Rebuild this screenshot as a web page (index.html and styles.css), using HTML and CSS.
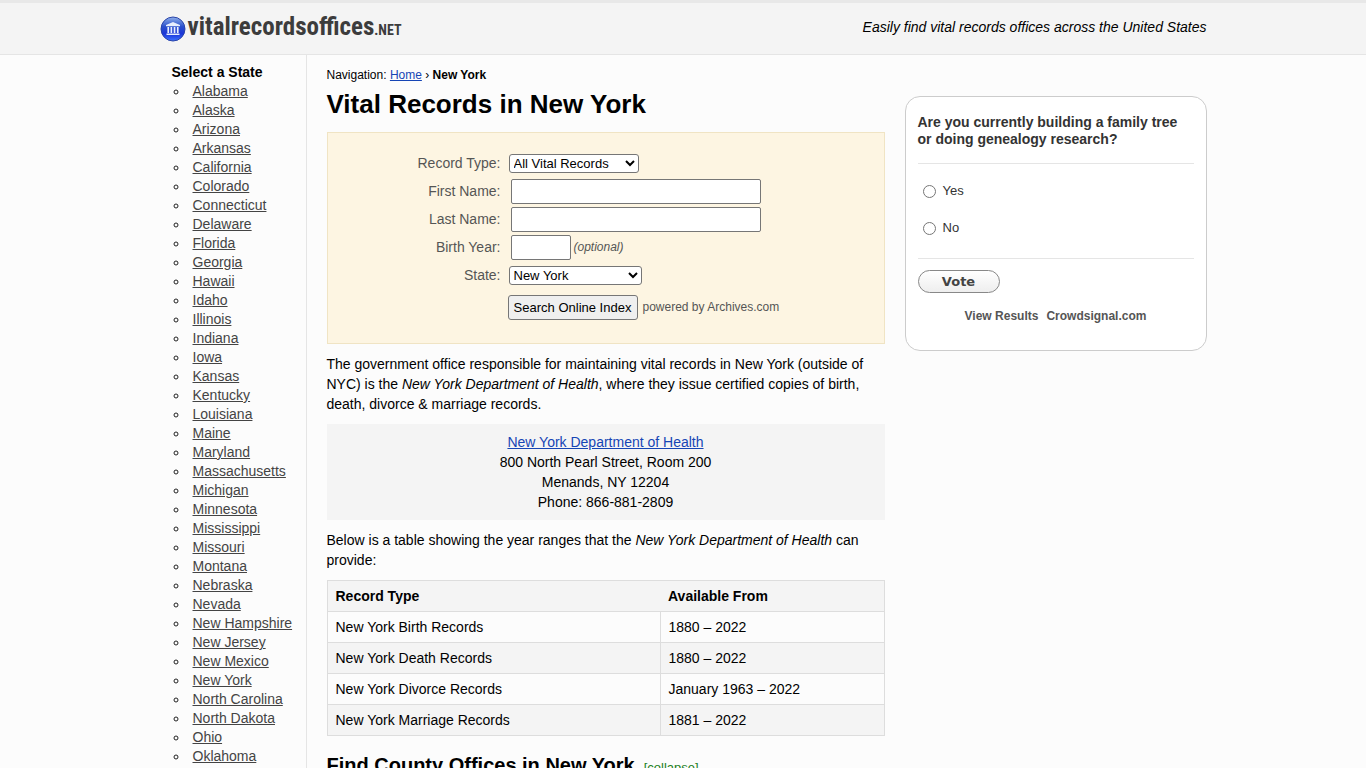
FILE: index.html
```html
<!DOCTYPE html>
<html lang="en">
<head>
<meta charset="utf-8">
<title>Vital Records in New York</title>
<link rel="stylesheet" href="styles.css">
</head>
<body>
<header class="site-header">
  <div class="container header-row">
    <a class="logo" href="#">
      <svg class="logo-icon" viewBox="0 0 26 26" aria-hidden="true">
        <defs>
          <linearGradient id="ball" x1="0" y1="0" x2="0" y2="1">
            <stop offset="0" stop-color="#8fb0ea"/>
            <stop offset=".4" stop-color="#2b50cc"/>
            <stop offset=".7" stop-color="#1a35d8"/>
            <stop offset="1" stop-color="#3f74ff"/>
          </linearGradient>
        </defs>
        <circle cx="13" cy="13" r="12" fill="url(#ball)" stroke="#2a44a8"/>
        <path fill="#e8effd" d="M13 6l7 3v1.300H6V9zM7.400 11h1.700v6H7.400zM10.500 11h1.700v6h-1.700zM13.700 11h1.700v6h-1.700zM16.900 11h1.700v6h-1.700zM6.500 17.400h13v1.600h-13z"/>
      </svg>
      <span class="logo-text">vitalrecordsoffices<span class="logo-tld">.NET</span></span>
    </a>
    <p class="tagline">Easily find vital records offices across the United States</p>
  </div>
</header>
<div class="container columns">
  <nav class="sidebar" aria-label="States">
    <strong>Select a State</strong>
    <ul class="states">
      <li><a href="#">Alabama</a></li>
      <li><a href="#">Alaska</a></li>
      <li><a href="#">Arizona</a></li>
      <li><a href="#">Arkansas</a></li>
      <li><a href="#">California</a></li>
      <li><a href="#">Colorado</a></li>
      <li><a href="#">Connecticut</a></li>
      <li><a href="#">Delaware</a></li>
      <li><a href="#">Florida</a></li>
      <li><a href="#">Georgia</a></li>
      <li><a href="#">Hawaii</a></li>
      <li><a href="#">Idaho</a></li>
      <li><a href="#">Illinois</a></li>
      <li><a href="#">Indiana</a></li>
      <li><a href="#">Iowa</a></li>
      <li><a href="#">Kansas</a></li>
      <li><a href="#">Kentucky</a></li>
      <li><a href="#">Louisiana</a></li>
      <li><a href="#">Maine</a></li>
      <li><a href="#">Maryland</a></li>
      <li><a href="#">Massachusetts</a></li>
      <li><a href="#">Michigan</a></li>
      <li><a href="#">Minnesota</a></li>
      <li><a href="#">Mississippi</a></li>
      <li><a href="#">Missouri</a></li>
      <li><a href="#">Montana</a></li>
      <li><a href="#">Nebraska</a></li>
      <li><a href="#">Nevada</a></li>
      <li><a href="#">New Hampshire</a></li>
      <li><a href="#">New Jersey</a></li>
      <li><a href="#">New Mexico</a></li>
      <li><a href="#">New York</a></li>
      <li><a href="#">North Carolina</a></li>
      <li><a href="#">North Dakota</a></li>
      <li><a href="#">Ohio</a></li>
      <li><a href="#">Oklahoma</a></li>
    </ul>
  </nav>
  <main class="main">
    <div class="breadcrumb">Navigation: <a href="#">Home</a> › <strong>New York</strong></div>
    <h1>Vital Records in New York</h1>
    <form class="search">
      <label for="type">Record Type:</label>
      <div class="field"><select id="type" class="select-type"><option>All Vital Records</option></select></div>
      <label for="first">First Name:</label>
      <div class="field"><input class="text" id="first" type="text"></div>
      <label for="last">Last Name:</label>
      <div class="field"><input class="text" id="last" type="text"></div>
      <label for="year">Birth Year:</label>
      <div class="field"><input class="text year" id="year" type="text"><small><em>(optional)</em></small></div>
      <label for="state">State:</label>
      <div class="field"><select id="state" class="select-state"><option>New York</option></select></div>
      <div class="field actions"><button class="submit" type="button">Search Online Index</button><small>powered by Archives.com</small></div>
    </form>
    <p>The government office responsible for maintaining vital records in New York (outside of NYC) is the <em>New York Department of Health</em>, where they issue certified copies of birth, death, divorce &amp; marriage records.</p>
    <address class="office">
      <a href="#">New York Department of Health</a><br>
      800 North Pearl Street, Room 200<br>
      Menands, NY 12204<br>
      Phone: 866-881-2809
    </address>
    <p>Below is a table showing the year ranges that the <em>New York Department of Health</em> can provide:</p>
    <table class="records">
      <thead><tr><th class="type-col">Record Type</th><th>Available From</th></tr></thead>
      <tbody>
        <tr><td>New York Birth Records</td><td>1880 – 2022</td></tr>
        <tr><td>New York Death Records</td><td>1880 – 2022</td></tr>
        <tr><td>New York Divorce Records</td><td>January 1963 – 2022</td></tr>
        <tr><td>New York Marriage Records</td><td>1881 – 2022</td></tr>
      </tbody>
    </table>
    <div class="section-head">
      <h2>Find County Offices in New York</h2>
      <a class="collapse" href="#">[collapse]</a>
    </div>
  </main>
  <aside class="aside">
    <form class="poll">
      <fieldset>
        <legend>Are you currently building a family tree or doing genealogy research?</legend>
        <div class="answers">
          <label><input type="radio" name="tree">Yes</label>
          <label><input type="radio" name="tree">No</label>
        </div>
      </fieldset>
      <button class="vote" type="button">Vote</button>
      <div class="poll-links"><a href="#">View Results</a><a href="#">Crowdsignal.com</a></div>
    </form>
  </aside>
</div>
</body>
</html>
```
FILE: styles.css
```css
* { box-sizing: border-box; }
body {
  margin: 0;
  background: #fcfcfc;
  color: #000;
  font: 14px/20px "Liberation Sans", Arial, sans-serif;
}
.container { max-width: 1047px; margin: 0 auto; }
.site-header {
  background: #f4f4f4;
  border-top: 3px solid #e8e8e8;
  border-bottom: 1px solid #e5e5e5;
}
.header-row {
  display: flex;
  align-items: center;
  justify-content: space-between;
  min-height: 51px;
}
.logo { display: flex; align-items: center; gap: 2px; color: #3c3c3c; text-decoration: none; }
.logo-icon { width: 26px; height: 26px; }
.logo-text { font: bold 25px/30px "Liberation Sans Narrow", "Roboto Condensed", "Open Sans Condensed", "DejaVu Sans Condensed", sans-serif; }
.logo-tld { font-size: 14px; }
.tagline { margin: 0; padding-bottom: 4px; font-style: italic; }

.columns { display: flex; }
.sidebar {
  flex: 0 0 147px;
  padding: 8px 0 8px 12px;
  border-right: 1px solid #e5e5e5;
  line-height: 19px;
}
.states { margin: 0; padding-left: 17px; list-style: circle; color: #222; }
.states li { padding-left: 4px; }
.states a { color: #444; }

.main { flex: 1; min-width: 0; padding: 10px 0 0 20px; }
.main a { color: #1645b5; }
.breadcrumb { font-size: 12px; }
h1 { margin: 0 0 8px; font-size: 26px; line-height: 39px; }
.search {
  display: grid;
  grid-template-columns: 173px 1fr;
  column-gap: 7px;
  padding: 16px 0 18px;
  margin-bottom: 10px;
  border: 1px solid #f0e4c4;
  background: #fdf5e2;
  color: #555;
}
.search label { text-align: right; line-height: 28px; }
.field { display: flex; align-items: center; min-height: 28px; }
.field small { font-size: 12px; }
.search select {
  height: 19px;
  margin-left: 1px;
  padding: 0;
  border: 1px solid #767676;
  border-radius: 3px;
  background-color: #fff;
  color: #000;
  font: 13px "Liberation Sans", Arial, sans-serif;
}
.search .select-type { width: 130px; }
.search .select-state { width: 133px; }
.text {
  width: 250px;
  height: 25px;
  margin: 0 3px;
  border: 1px solid #767676;
  border-radius: 2px;
  background: #fff;
  font: 13px "Liberation Sans", Arial, sans-serif;
}
.year { width: 60px; }
.actions { grid-column: 2; gap: 5px; min-height: 36px; }
.submit {
  height: 25px;
  width: 130px;
  padding: 0;
  border: 1px solid #767676;
  border-radius: 3px;
  background: #efefef;
  color: #000;
  white-space: nowrap;
  font: 13px "Liberation Sans", Arial, sans-serif;
}
p { margin: 0 0 10px; }
.office {
  margin-bottom: 10px;
  padding: 8px;
  background: #f4f4f4;
  font-style: normal;
  text-align: center;
}
.records { width: 100%; border: 1px solid #ddd; border-collapse: collapse; }
.records th { padding: 5px 8px; background: #f4f4f4; text-align: left; }
.records td { padding: 5px 8px; border: 1px solid #ddd; }
.records tr:nth-child(even) td { background: #f4f4f4; }
.type-col { width: 333px; }
.section-head { display: flex; align-items: baseline; gap: 9px; margin-top: 16px; }
h2 { margin: 0; font-size: 20px; line-height: 26px; }
.main .collapse { color: #228022; font-size: 13px; text-decoration: none; }

.aside { flex: 0 0 322px; padding: 41px 0 0 20px; }
.poll {
  padding: 17px 12px 24px;
  border: 1px solid #ccc;
  border-radius: 15px;
  background: #fff;
  color: #333;
}
.poll fieldset { margin: 0 0 11px; padding: 0; border: 0; }
.poll legend { padding: 0 0 15px; font-weight: bold; line-height: 17px; }
.answers {
  display: flex;
  flex-direction: column;
  gap: 17px;
  padding: 17px 5px 20px;
  border-top: 1px solid #e5e5e5;
  border-bottom: 1px solid #e5e5e5;
  font-size: 13px;
}
.answers label { display: flex; align-items: center; gap: 7px; }
.answers input { width: 13px; height: 13px; margin: 0; }
.vote {
  display: block;
  width: 82px;
  height: 23px;
  padding: 0;
  border: 1px solid #888;
  border-radius: 12px;
  background: linear-gradient(#fff, #eee);
  color: #444;
  font: bold 13px "DejaVu Sans", Verdana, sans-serif;
}
.poll-links { display: flex; justify-content: center; gap: 8px; margin-top: 13px; }
.poll-links a { color: #555; font-size: 12px; font-weight: bold; text-decoration: none; }
```
